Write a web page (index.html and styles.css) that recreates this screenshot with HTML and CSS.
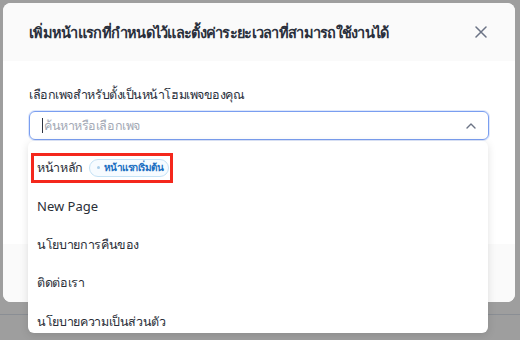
FILE: index.html
```html
<!DOCTYPE html>
<html lang="th">
<head>
  <meta charset="UTF-8">
  <title>ตั้งค่าหน้าแรก</title>
  <link rel="stylesheet" href="styles.css">
</head>
<body>

  <div class="backdrop">
    <div class="page-line"></div>

    <div class="modal">
      <div class="modal-header">
        <h2>เพิ่มหน้าแรกที่กำหนดไว้และตั้งค่าระยะเวลาที่สามารถใช้งานได้</h2>
        <button class="close" aria-label="ปิด">
          <svg width="12" height="12" viewBox="0 0 12 12">
            <path d="M1 1 L11 11 M11 1 L1 11" stroke="#6b7385" stroke-width="1.5" fill="none" stroke-linecap="round"/>
          </svg>
        </button>
      </div>

      <div class="modal-body">
        <label class="field-label">เลือกเพจสำหรับตั้งเป็นหน้าโฮมเพจของคุณ</label>
        <div class="select">
          <div class="select-input">
            <span class="caret"></span>
            <span class="placeholder">ค้นหาหรือเลือกเพจ</span>
            <svg class="chevron" width="10" height="6" viewBox="0 0 10 6">
              <path d="M1 5 L5 1 L9 5" stroke="#6b7385" stroke-width="1.4" fill="none" stroke-linecap="round" stroke-linejoin="round"/>
            </svg>
          </div>

          <ul class="dropdown">
            <li><span class="opt highlight">หน้าหลัก <span class="badge"><i></i>หน้าแรกเริ่มต้น</span></span></li>
            <li><span class="opt latin">New Page</span></li>
            <li><span class="opt">นโยบายการคืนของ</span></li>
            <li><span class="opt">ติดต่อเรา</span></li>
            <li><span class="opt">นโยบายความเป็นส่วนตัว</span></li>
          </ul>
        </div>
      </div>

      <div class="modal-footer"></div>
    </div>
  </div>

</body>
</html>
```

FILE: styles.css
```css
body { margin: 0; font-family: "Noto Sans", sans-serif; color: #2b2f38; }
.backdrop { position: relative; width: 520px; height: 340px; background: #9e9e9e; overflow: hidden; padding-top: 3px; box-sizing: border-box; }
.page-line { position: absolute; left: 0; right: 0; top: 314px; height: 1px; background: #8a8e94; }

.modal { position: relative; margin-left: 3px; width: 512px; height: 299px; background: #fff; border-radius: 8px; display: flex; flex-direction: column; }
.modal-header { height: 58px; background: #fafafa; border-radius: 8px 8px 0 0; padding: 0 26px; display: flex; align-items: center; justify-content: space-between; flex-shrink: 0; }
.modal-header h2 { margin: 0; font-size: 14.5px; font-weight: 700; letter-spacing: -0.72px; color: #2a303c; }
.close { border: none; background: none; padding: 0; margin-right: 2px; display: flex; }

.modal-body { flex: 1; padding: 24px 26px 0; }
.field-label { display: block; font-size: 12.5px; letter-spacing: -0.45px; color: #2a303c; line-height: 20px; }
.select { position: relative; margin-top: 6px; }
.select-input { height: 27px; border: 1px solid #7a9ef0; border-radius: 6px; display: flex; align-items: center; padding: 0 10px 0 12px; box-shadow: 0 0 0 1px rgba(122, 158, 240, 0.25); }
.caret { width: 1px; height: 15px; background: #2d3340; margin-right: 1px; }
.placeholder { flex: 1; font-size: 12.5px; letter-spacing: -0.45px; color: #a3a9b5; }
.chevron { margin-right: 2px; }

.dropdown { position: absolute; z-index: 2; left: -1px; top: 30px; width: 460px; height: 192px; margin: 0; padding: 7.5px 0 0; list-style: none; background: #fff; border-radius: 6px; box-shadow: 0 2px 8px rgba(0, 0, 0, 0.12); box-sizing: border-box; }
.dropdown li { height: 38.5px; display: flex; align-items: center; padding-left: 3px; font-size: 12.5px; letter-spacing: -0.35px; }
.opt { display: inline-flex; align-items: center; gap: 6px; height: 24px; padding: 0 3px; border: 3px solid transparent; }
.opt.latin { font-size: 13px; letter-spacing: 0; }
.opt.highlight { border-color: #f4281c; padding-right: 1px; }
.badge { display: inline-flex; align-items: center; gap: 4px; height: 16px; padding: 0 5px 0 7px; border: 1px solid #c5e2f5; border-radius: 9px; background: #f6fbff; color: #1b6fc2; font-size: 10px; font-weight: 700; letter-spacing: -0.5px; }
.badge i { width: 3px; height: 3px; border-radius: 50%; background: #a9cdea; }

.modal-footer { height: 58px; background: #fafafa; border-radius: 0 0 8px 8px; flex-shrink: 0; }
```
